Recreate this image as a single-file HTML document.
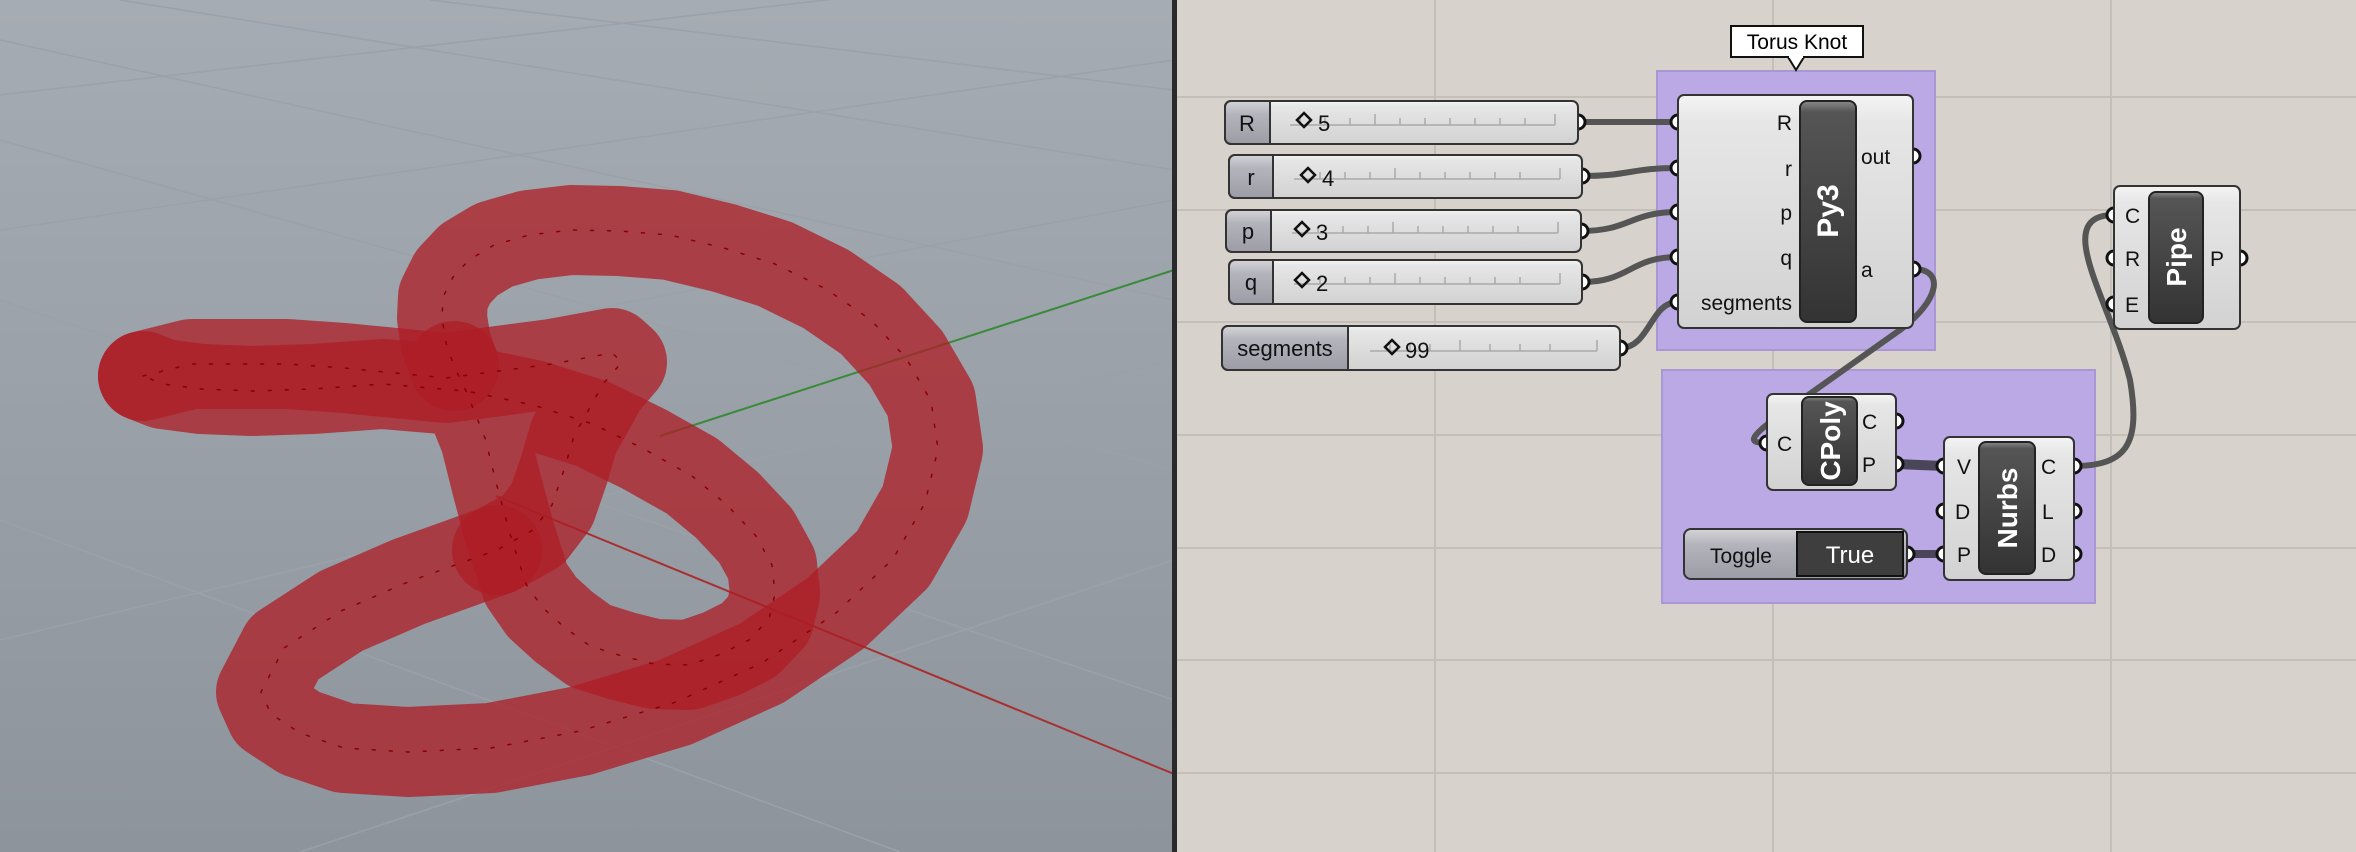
<!DOCTYPE html>
<html><head><meta charset="utf-8"><style>
html,body{margin:0;padding:0;width:2356px;height:852px;overflow:hidden;background:#d7d3cc}
svg{display:block}
text{font-family:"Liberation Sans",sans-serif}
</style></head><body>
<svg width="2356" height="852" viewBox="0 0 2356 852" xmlns="http://www.w3.org/2000/svg">
<defs>
<linearGradient id="vp" x1="0" y1="0" x2="0" y2="1"><stop offset="0" stop-color="#a6acb3"/><stop offset="1" stop-color="#8d949c"/></linearGradient>
<linearGradient id="body" x1="0" y1="0" x2="0" y2="1"><stop offset="0" stop-color="#f4f4f4"/><stop offset="0.12" stop-color="#e6e6e6"/><stop offset="1" stop-color="#d2d2d2"/></linearGradient>
<linearGradient id="lab" x1="0" y1="0" x2="0" y2="1"><stop offset="0" stop-color="#d4d4d8"/><stop offset="0.3" stop-color="#b4b4bc"/><stop offset="1" stop-color="#9c9ca6"/></linearGradient>
<linearGradient id="bar" x1="0" y1="0" x2="0" y2="1"><stop offset="0" stop-color="#8a8a8a"/><stop offset="0.05" stop-color="#555"/><stop offset="1" stop-color="#333"/></linearGradient>
</defs>
<rect x="0" y="0" width="1174" height="852" fill="url(#vp)"/>
<g stroke="#9ba1a8" stroke-width="1.5" fill="none">
<path d="M0 95 L1174 -40 M0 230 L1174 60 M0 420 L1174 200 M0 640 L1174 360 M300 852 L1174 560"/>
<path d="M0 40 L1174 300 M0 140 L1174 470 M0 300 L1174 700 M0 520 L900 852 M120 0 L1174 170 M430 0 L1174 90"/>
</g>
<line x1="660" y1="436" x2="1174" y2="270" stroke="#3a8a3a" stroke-width="2"/>
<line x1="496" y1="496" x2="1174" y2="774" stroke="#a83030" stroke-width="2"/>
<g fill="none" stroke-linecap="round" stroke-linejoin="round">
<g stroke="#ad1c24" stroke-opacity="0.75" stroke-width="90">
<path d="M143 376 L191 364 L287 364 L344 368 L446 378 L552 364 L612 353 L622 362 L603 384 L574 436 L564 470 L552 505 L533 530 L497 550"/>
<path d="M497 550 L408 582 L341 611 L284 648 L261 692 L271 714 L300 733 L344 748 L408 752 L491 748 L580 731 L676 702 L762 663 L836 613 L893 559 L925 503 L938 449 L931 401 L906 358 L871 320 L826 289 L775 264 L724 248 L670 235 L619 231 L571 230 L529 235 L494 245 L469 260 L453 277 L443 297 L442 318 L446 343 L454 366"/>
<path d="M454 366 L466 391 L485 438 L497 486 L510 534 L526 584 L542 607 L564 627 L590 646 L622 656 L654 664 L689 665 L721 654 L749 640 L769 619 L775 594 L772 565 L756 536 L727 505 L692 476 L644 449 L593 424 L533 405 L466 391 L383 384 L313 389 L252 391 L201 389 L163 384 L143 376"/>
</g>
<path stroke="#8a0000" stroke-width="1.5" stroke-dasharray="3 14" d="M143 376 L191 364 L287 364 L344 368 L446 378 L552 364 L612 353 L622 362 L603 384 L574 436 L564 470 L552 505 L533 530 L497 550 L408 582 L341 611 L284 648 L261 692 L271 714 L300 733 L344 748 L408 752 L491 748 L580 731 L676 702 L762 663 L836 613 L893 559 L925 503 L938 449 L931 401 L906 358 L871 320 L826 289 L775 264 L724 248 L670 235 L619 231 L571 230 L529 235 L494 245 L469 260 L453 277 L443 297 L442 318 L446 343 L454 366 L466 391 L485 438 L497 486 L510 534 L526 584 L542 607 L564 627 L590 646 L622 656 L654 664 L689 665 L721 654 L749 640 L769 619 L775 594 L772 565 L756 536 L727 505 L692 476 L644 449 L593 424 L533 405 L466 391 L383 384 L313 389 L252 391 L201 389 L163 384 L143 376"/>
</g>
<rect x="1172" y="0" width="5" height="852" fill="#2a2a2a"/>
<g stroke="#c4c0b9" stroke-width="2">
<path d="M1435 0V852M1773 0V852M2111 0V852"/>
<path d="M1177 97H2356M1177 210H2356M1177 322H2356M1177 435H2356M1177 548H2356M1177 660H2356M1177 773H2356"/>
</g>
<rect x="1657" y="71" width="278" height="279" fill="#bba9e6" stroke="#a897d2" stroke-width="2"/>
<rect x="1662" y="370" width="433" height="233" fill="#bba9e6" stroke="#a897d2" stroke-width="2"/>
<rect x="1731" y="26" width="132" height="31" fill="#fff" stroke="#111" stroke-width="2"/>
<path d="M1788 57 L1796 70 L1804 57" fill="#fff" stroke="#111" stroke-width="2"/>
<rect x="1789" y="54" width="14" height="4" fill="#fff"/>
<text x="1797" y="49" font-size="21" text-anchor="middle" fill="#000">Torus Knot</text>
<g fill="none" stroke="#555" stroke-width="6">
<path d="M1578 122 L1678 122"/>
<path d="M1582 176 C1630 176 1630 168 1678 168"/>
<path d="M1581 231 C1630 231 1630 212 1678 212"/>
<path d="M1582 282 C1630 282 1630 257 1678 257"/>
<path d="M1620 348 C1650 348 1650 302 1678 302"/>
<path d="M1913 269 C1945 269 1940 300 1900 330 L1780 415 C1745 440 1750 443 1767 443"/>
<path d="M2074 466 C2130 466 2140 440 2130 380 C2110 300 2050 215 2114 215"/>
</g>
<path d="M1896 464 L1944 466" stroke="#4a4558" stroke-width="10"/>
<path d="M1907 554 L1944 554" stroke="#4a4558" stroke-width="8"/>
<g fill="#fff" stroke="#111" stroke-width="3">
<circle cx="1578" cy="122" r="7"/><circle cx="1582" cy="176" r="7"/><circle cx="1581" cy="231" r="7"/><circle cx="1582" cy="282" r="7"/><circle cx="1620" cy="348" r="7"/>
<circle cx="1678" cy="122" r="7"/><circle cx="1678" cy="168" r="7"/><circle cx="1678" cy="212" r="7"/><circle cx="1678" cy="257" r="7"/><circle cx="1678" cy="302" r="7"/>
<circle cx="1913" cy="156" r="7"/><circle cx="1913" cy="269" r="7"/>
<circle cx="1767" cy="443" r="7"/><circle cx="1896" cy="421" r="7"/><circle cx="1896" cy="464" r="7"/>
<circle cx="1944" cy="466" r="7"/><circle cx="1944" cy="511" r="7"/><circle cx="1944" cy="554" r="7"/>
<circle cx="2074" cy="466" r="7"/><circle cx="2074" cy="511" r="7"/><circle cx="2074" cy="554" r="7"/>
<circle cx="1907" cy="554" r="7"/>
<circle cx="2114" cy="215" r="7"/><circle cx="2114" cy="258" r="7"/><circle cx="2114" cy="304" r="7"/><circle cx="2240" cy="258" r="7"/>
</g>
<g stroke="#333" stroke-width="2">
<rect x="1225" y="101" width="353" height="43" rx="6" fill="url(#body)"/>
<path d="M1231 101H1270V144H1231A6 6 0 0 1 1225 138V107A6 6 0 0 1 1231 101Z" fill="url(#lab)"/>
<rect x="1229" y="155" width="353" height="43" rx="6" fill="url(#body)"/>
<path d="M1235 155H1273V198H1235A6 6 0 0 1 1229 192V161A6 6 0 0 1 1235 155Z" fill="url(#lab)"/>
<rect x="1226" y="210" width="355" height="42" rx="6" fill="url(#body)"/>
<path d="M1232 210H1271V252H1232A6 6 0 0 1 1226 246V216A6 6 0 0 1 1232 210Z" fill="url(#lab)"/>
<rect x="1229" y="260" width="353" height="44" rx="6" fill="url(#body)"/>
<path d="M1235 260H1273V304H1235A6 6 0 0 1 1229 298V266A6 6 0 0 1 1235 260Z" fill="url(#lab)"/>
<rect x="1222" y="326" width="398" height="44" rx="6" fill="url(#body)"/>
<path d="M1228 326H1348V370H1228A6 6 0 0 1 1222 364V332A6 6 0 0 1 1228 326Z" fill="url(#lab)"/>
</g>
<g stroke="#aaa" stroke-width="1.5" fill="none">
<path d="M1290 125H1555 M1300 118V125M1325 118V125M1350 118V125M1375 114V125M1400 118V125M1425 118V125M1450 118V125M1475 118V125M1500 118V125M1525 118V125M1555 114V125"/>
<path d="M1294 179H1560 M1320 172V179M1345 172V179M1370 172V179M1395 168V179M1420 172V179M1445 172V179M1470 172V179M1495 172V179M1520 172V179M1560 168V179"/>
<path d="M1292 233H1558 M1318 226V233M1343 226V233M1368 226V233M1393 222V233M1418 226V233M1443 226V233M1468 226V233M1493 226V233M1518 226V233M1558 222V233"/>
<path d="M1294 284H1560 M1320 277V284M1345 277V284M1370 277V284M1395 273V284M1420 277V284M1445 277V284M1470 277V284M1495 277V284M1520 277V284M1560 273V284"/>
<path d="M1370 351H1597 M1390 344V351M1410 344V351M1430 344V351M1460 340V351M1490 344V351M1520 344V351M1550 344V351M1597 340V351"/>
</g>
<g font-size="22" fill="#111">
<text x="1247" y="131" text-anchor="middle">R</text>
<text x="1251" y="185" text-anchor="middle">r</text>
<text x="1248" y="239" text-anchor="middle">p</text>
<text x="1251" y="290" text-anchor="middle">q</text>
<text x="1285" y="356" text-anchor="middle">segments</text>
<text x="1318" y="131">5</text><text x="1322" y="186">4</text><text x="1316" y="240">3</text><text x="1316" y="291">2</text><text x="1405" y="358">99</text>
</g>
<g fill="none" stroke="#111" stroke-width="2.5">
<path d="M1304 113 l7 7 l-7 7 l-7 -7z"/><path d="M1308 168 l7 7 l-7 7 l-7 -7z"/><path d="M1302 222 l7 7 l-7 7 l-7 -7z"/><path d="M1302 273 l7 7 l-7 7 l-7 -7z"/><path d="M1392 340 l7 7 l-7 7 l-7 -7z"/>
</g>
<rect x="1678" y="95" width="235" height="233" rx="6" fill="url(#body)" stroke="#333" stroke-width="2"/>
<rect x="1800" y="101" width="56" height="221" rx="7" fill="url(#bar)" stroke="#222" stroke-width="2"/>
<g font-size="21" fill="#111" text-anchor="end">
<text x="1792" y="130">R</text><text x="1792" y="176">r</text><text x="1792" y="220">p</text><text x="1792" y="265">q</text><text x="1792" y="310">segments</text>
</g>
<g font-size="21" fill="#111"><text x="1861" y="164">out</text><text x="1861" y="277">a</text></g>
<text transform="translate(1838 211) rotate(-90)" font-size="30" font-weight="bold" fill="#fff" text-anchor="middle">Py3</text>
<rect x="1767" y="394" width="129" height="96" rx="6" fill="url(#body)" stroke="#333" stroke-width="2"/>
<rect x="1802" y="397" width="55" height="88" rx="7" fill="url(#bar)" stroke="#222" stroke-width="2"/>
<g font-size="21" fill="#111"><text x="1777" y="451">C</text><text x="1862" y="429">C</text><text x="1862" y="472">P</text></g>
<text transform="translate(1840 441) rotate(-90)" font-size="28" font-weight="bold" fill="#fff" text-anchor="middle">CPoly</text>
<rect x="1944" y="437" width="130" height="143" rx="6" fill="url(#body)" stroke="#333" stroke-width="2"/>
<rect x="1979" y="442" width="56" height="132" rx="7" fill="url(#bar)" stroke="#222" stroke-width="2"/>
<g font-size="21" fill="#111"><text x="1957" y="474">V</text><text x="1955" y="519">D</text><text x="1957" y="562">P</text><text x="2041" y="474">C</text><text x="2042" y="519">L</text><text x="2041" y="562">D</text></g>
<text transform="translate(2017 508) rotate(-90)" font-size="28" font-weight="bold" fill="#fff" text-anchor="middle">Nurbs</text>
<rect x="1684" y="529" width="223" height="50" rx="7" fill="url(#lab)" stroke="#333" stroke-width="2"/>
<rect x="1797" y="532" width="106" height="44" fill="#3e3e3e" stroke="#111" stroke-width="2"/>
<text x="1741" y="563" font-size="21" fill="#111" text-anchor="middle">Toggle</text>
<text x="1850" y="563" font-size="24" fill="#fff" text-anchor="middle" font-family="Liberation Mono, monospace">True</text>
<rect x="2114" y="186" width="126" height="143" rx="6" fill="url(#body)" stroke="#333" stroke-width="2"/>
<rect x="2149" y="192" width="54" height="131" rx="7" fill="url(#bar)" stroke="#222" stroke-width="2"/>
<g font-size="21" fill="#111"><text x="2125" y="223">C</text><text x="2125" y="266">R</text><text x="2125" y="312">E</text><text x="2210" y="266">P</text></g>
<text transform="translate(2186 257) rotate(-90)" font-size="28" font-weight="bold" fill="#fff" text-anchor="middle">Pipe</text>
</svg>
</body></html>
